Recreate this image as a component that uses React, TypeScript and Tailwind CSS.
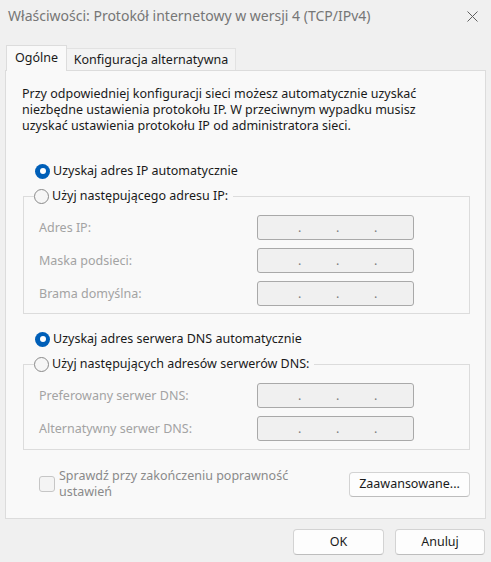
import React from "react";

function Radio({ checked }: { checked?: boolean }) {
  return checked ? (
    <span className="w-[15px] h-[15px] rounded-full bg-[#005fb8] flex items-center justify-center shrink-0">
      <span className="w-[6px] h-[6px] rounded-full bg-white" />
    </span>
  ) : (
    <span className="w-[15px] h-[15px] rounded-full border border-[#8a8a8a] bg-[#f6f6f6] shrink-0" />
  );
}

function IpBox() {
  return (
    <div className="w-[157px] h-[25px] rounded-[3px] border border-[#a9a9a9] bg-[#f0f0f0] flex items-center pl-[40px] text-[#7d7d7d] leading-[16px]">
      <span className="w-[38px]">.</span>
      <span className="w-[38px]">.</span>
      <span className="w-[38px]">.</span>
    </div>
  );
}

function Row({ label }: { label: string }) {
  return (
    <div className="flex items-center h-[25px]">
      <span className="w-[218px] text-[#a3a3a3]">{label}</span>
      <IpBox />
    </div>
  );
}

export default function App() {
  return (
    <div className="w-[491px] h-[562px] bg-[#f0f0f0] font-['Noto_Sans',sans-serif] text-[12.5px] leading-[16px] text-[#1a1a1a] flex flex-col overflow-hidden">
      <div className="h-[32px] flex items-center justify-between pl-[8px] pr-[13px] shrink-0">
        <span className="text-[14px] text-[#767676]">Właściwości: Protokół internetowy w wersji 4 (TCP/IPv4)</span>
        <svg width="11" height="11" viewBox="0 0 11 11">
          <path d="M0.5 0.5L10.5 10.5M10.5 0.5L0.5 10.5" stroke="#5f5f5f" strokeWidth="1" />
        </svg>
      </div>

      <div className="flex items-end pl-[6px] mt-[13px] h-[26px] -mb-px relative z-10 shrink-0">
        <div className="h-[26px] w-[61px] border-l border-t border-r border-[#dcdcdc] bg-[#f9f9f9] flex items-center justify-center pb-[2px]">
          Ogólne
        </div>
        <div className="h-[22px] w-[169px] mb-px border-t border-r border-[#e2e2e2] bg-[#f3f3f3] flex items-center justify-center">
          Konfiguracja alternatywna
        </div>
      </div>

      <div className="mx-[5px] h-[449px] border border-[#dcdcdc] bg-[#f9f9f9] flex flex-col shrink-0">
        <p className="pl-[16px] pt-[15px]">
          Przy odpowiedniej konfiguracji sieci możesz automatycznie uzyskać
          <br />
          niezbędne ustawienia protokołu IP. W przeciwnym wypadku musisz
          <br />
          uzyskać ustawienia protokołu IP od administratora sieci.
        </p>

        <div className="flex items-center gap-[3px] ml-[29px] mt-[29px] h-[16px]">
          <Radio checked />
          <span>Uzyskaj adres IP automatycznie</span>
        </div>

        <fieldset className="ml-[17px] w-[447px] mt-[9px] border border-[#dcdcdc] pb-[7px]">
          <legend className="ml-[10px] pr-[5px] flex items-center gap-[3px] h-[16px]">
            <Radio />
            <span>Użyj następującego adresu IP:</span>
          </legend>
          <div className="flex flex-col gap-[8px] pl-[15px] pt-[11px]">
            <Row label="Adres IP:" />
            <Row label="Maska podsieci:" />
            <Row label="Brama domyślna:" />
          </div>
        </fieldset>

        <div className="flex items-center gap-[3px] ml-[29px] mt-[17px] h-[16px]">
          <Radio checked />
          <span>Uzyskaj adres serwera DNS automatycznie</span>
        </div>

        <fieldset className="ml-[17px] w-[447px] mt-[9px] border border-[#dcdcdc] pb-[8px]">
          <legend className="ml-[10px] pr-[5px] flex items-center gap-[3px] h-[16px]">
            <Radio />
            <span>Użyj następujących adresów serwerów DNS:</span>
          </legend>
          <div className="flex flex-col gap-[8px] pl-[15px] pt-[11px]">
            <Row label="Preferowany serwer DNS:" />
            <Row label="Alternatywny serwer DNS:" />
          </div>
        </fieldset>

        <div className="flex items-center justify-between mt-[18px] ml-[33px] mr-[15px]">
          <div className="flex items-center gap-[4px]">
            <span className="w-[16px] h-[16px] rounded-[3px] border border-[#c6c6c6] bg-[#f4f4f4] shrink-0" />
            <span className="text-[#8a8a8a]">
              Sprawdź przy zakończeniu poprawność
              <br />
              ustawień
            </span>
          </div>
          <button className="w-[121px] h-[25px] rounded-[4px] border border-[#d3d3d3] border-b-[#bdbdbd] bg-[#fdfdfd] text-[#1a1a1a]">
            Zaawansowane...
          </button>
        </div>
      </div>

      <div className="flex justify-end gap-[11px] pr-[6px] mt-[10px]">
        <button className="w-[91px] h-[26px] rounded-[4px] border border-[#d3d3d3] border-b-[#bdbdbd] bg-[#fdfdfd]">OK</button>
        <button className="w-[90px] h-[26px] rounded-[4px] border border-[#d3d3d3] border-b-[#bdbdbd] bg-[#fdfdfd]">Anuluj</button>
      </div>
    </div>
  );
}
